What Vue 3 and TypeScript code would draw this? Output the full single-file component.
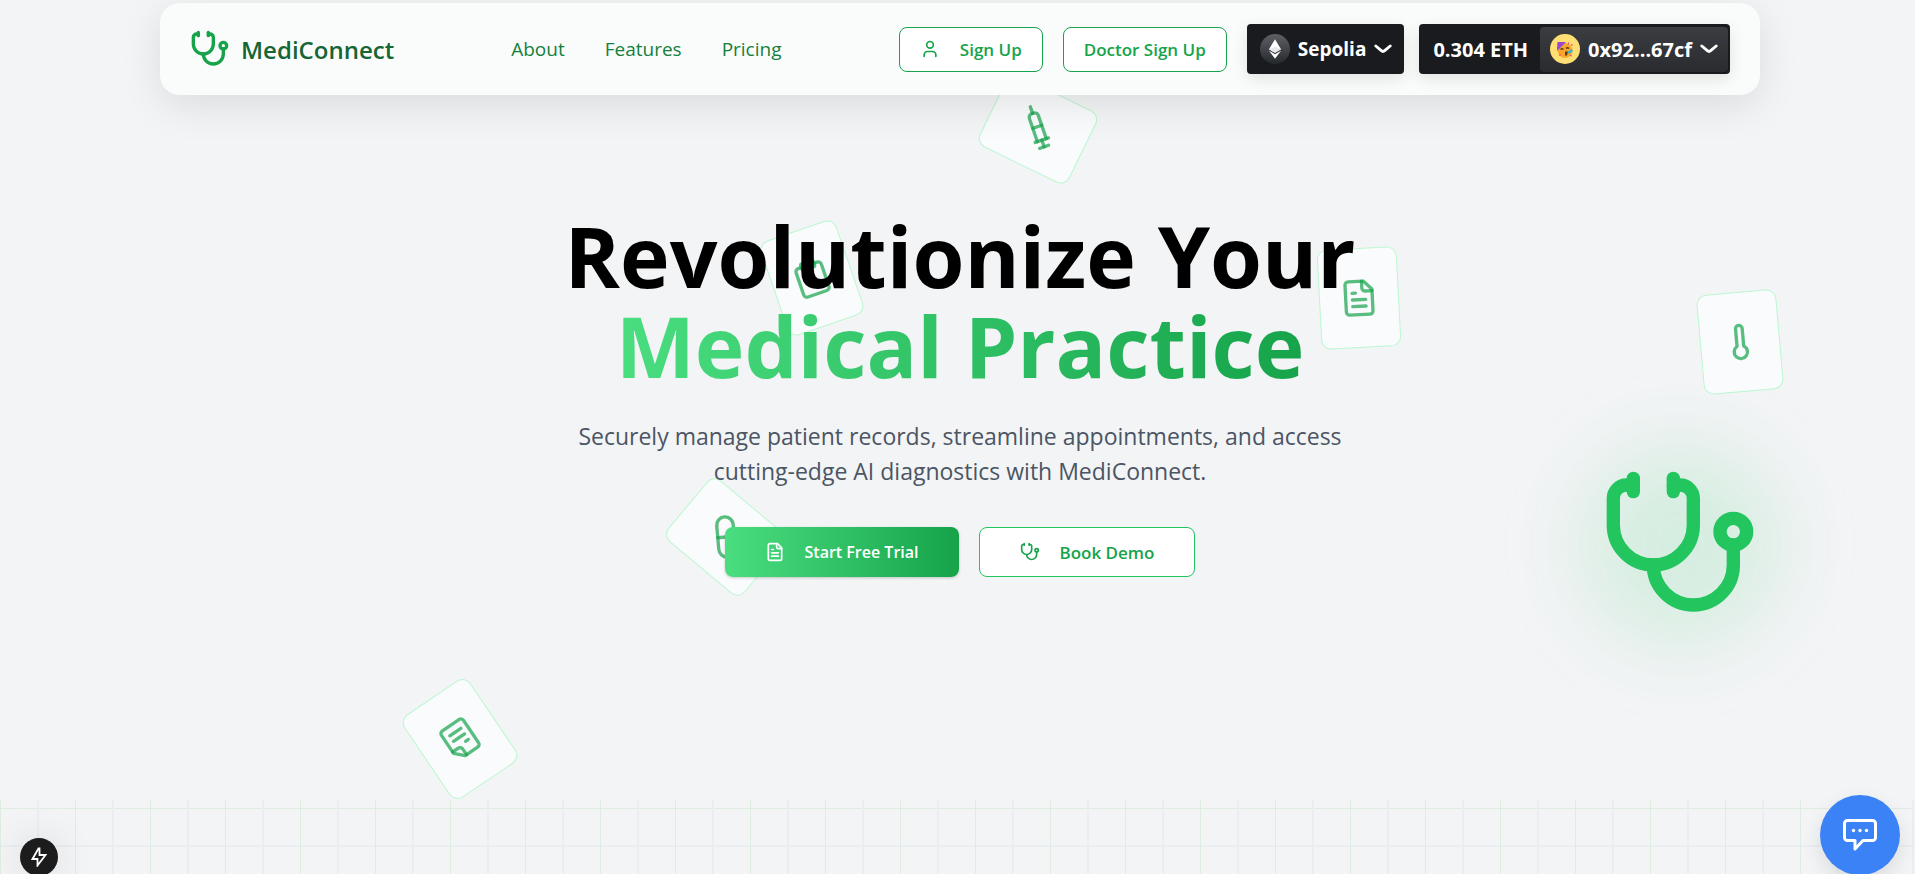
<script setup lang="ts">
interface FloatCard {
  name: string
  paths: string[]
}

const FILE_TEXT: string[] = [
  'M15 2H6a2 2 0 0 0-2 2v16a2 2 0 0 0 2 2h12a2 2 0 0 0 2-2V7Z',
  'M14 2v4a2 2 0 0 0 2 2h4',
  'M10 9H8',
  'M16 13H8',
  'M16 17H8',
]
const STETHOSCOPE: string[] = [
  'M11 2v2',
  'M5 2v2',
  'M5 3H4a2 2 0 0 0-2 2v4a6 6 0 0 0 12 0V5a2 2 0 0 0-2-2h-1',
  'M8 15a6 6 0 0 0 12 0v-3',
  'M22 10a2 2 0 1 1-4 0a2 2 0 1 1 4 0',
]

const cards: FloatCard[] = [
  {
    name: 'syringe',
    paths: [
      'm18 2 4 4',
      'm17 7 3-3',
      'M19 9 8.7 19.3c-1 1-2.5 1-3.4 0l-.6-.6c-1-1-1-2.5 0-3.4L15 5',
      'm9 11 4 4',
      'm5 19-3 3',
      'm14 4 6 6',
    ],
  },
  {
    name: 'clipboard',
    paths: [
      'M9 2h6a1 1 0 0 1 1 1v2a1 1 0 0 1-1 1H9a1 1 0 0 1-1-1V3a1 1 0 0 1 1-1Z',
      'M16 4h2a2 2 0 0 1 2 2v14a2 2 0 0 1-2 2H6a2 2 0 0 1-2-2V6a2 2 0 0 1 2-2h2',
    ],
  },
  { name: 'record', paths: FILE_TEXT },
  { name: 'thermometer', paths: ['M14 4v10.54a4 4 0 1 1-4 0V4a2 2 0 0 1 4 0Z'] },
  {
    name: 'pill',
    paths: ['m10.5 20.5 10-10a4.95 4.95 0 1 0-7-7l-10 10a4.95 4.95 0 1 0 7 7Z', 'm8.5 8.5 7 7'],
  },
  { name: 'note', paths: FILE_TEXT },
]

const links: string[] = ['About', 'Features', 'Pricing']
</script>

<template>
  <div class="page">
    <div class="scene" aria-hidden="true">
      <div class="glow"></div>
      <div v-for="card in cards" :key="card.name" class="float-card" :class="card.name">
        <svg class="icon" viewBox="0 0 24 24">
          <path v-for="d in card.paths" :key="d" :d="d" />
        </svg>
      </div>
      <svg class="icon hero-scope" viewBox="0 0 24 24">
        <path v-for="d in STETHOSCOPE" :key="d" :d="d" />
      </svg>
    </div>

    <header class="header">
      <nav class="navbar">
        <a class="brand" href="#">
          <svg class="icon brand-icon" viewBox="0 0 24 24" aria-hidden="true">
            <path v-for="d in STETHOSCOPE" :key="d" :d="d" />
          </svg>
          <span>MediConnect</span>
        </a>
        <div class="links">
          <a v-for="link in links" :key="link" :href="'#' + link.toLowerCase()">{{ link }}</a>
        </div>
        <div class="actions">
          <button type="button" class="outline-btn">
            <svg class="icon small-icon" viewBox="0 0 24 24" aria-hidden="true">
              <path d="M19 21v-2a4 4 0 0 0-4-4H9a4 4 0 0 0-4 4v2" />
              <circle cx="12" cy="7" r="4" />
            </svg>
            <span>Sign Up</span>
          </button>
          <button type="button" class="outline-btn">Doctor Sign Up</button>
          <div class="wallet">
            <button type="button" class="chain">
              <svg class="token" viewBox="0 0 28 28" aria-hidden="true">
                <defs>
                  <linearGradient id="token-bg" x1="0" y1="0" x2="0" y2="1">
                    <stop offset="0" stop-color="#5f6065" />
                    <stop offset="1" stop-color="#25292e" />
                  </linearGradient>
                </defs>
                <circle cx="14" cy="14" r="14" fill="url(#token-bg)" />
                <path d="M8.4 14.3 14 4.8l5.6 9.5-5.6 3.2Z" fill="#fff" />
                <path d="m8.4 15.6 5.6 3.2 5.6-3.2L14 23.2Z" fill="#fff" />
                <path d="m8.4 14.3 5.6-2.4 5.6 2.4-5.6 3.2Z" fill="#e6e7e9" />
              </svg>
              <span>Sepolia</span>
              <svg class="chevron" viewBox="-0.5 -0.5 15 8" aria-hidden="true">
                <path d="m1 1 4.6 3.9c.8.7 2 .7 2.8 0L13 1" />
              </svg>
            </button>
            <button type="button" class="account">
              <span class="balance">0.304 ETH</span>
              <span class="address">
                <svg class="token" viewBox="0 0 30 30" aria-hidden="true">
                  <circle cx="15" cy="15" r="15" fill="#ffdf74" />
                  <circle cx="15" cy="16.5" r="7.4" fill="#f9a72b" />
                  <path d="M7.5 8h8.5l-9 9Z" fill="#8b4bd6" />
                  <path d="m9 8 3 4M13 8l-6 6" stroke="#c63bb4" stroke-width="1" />
                  <path d="M10.5 15.5q1.5-1.5 3 0M16 14.5q1.5-1.5 3 0" fill="none" stroke="#5d3a12" stroke-width="1.2" />
                  <path d="M15 17.5h3l-1 4h-2Z" fill="#5d3a12" />
                  <path d="m17.5 18 4-3 1.5 2-4 3Z" fill="#2fb5d6" />
                  <path d="M18.5 8.5v2M21 10.5l1.5 1M10 20v2M20 21.5l2 .5" stroke="#ec4b7b" stroke-width="1.2" />
                </svg>
                <span>0x92...67cf</span>
                <svg class="chevron" viewBox="-0.5 -0.5 15 8" aria-hidden="true">
                  <path d="m1 1 4.6 3.9c.8.7 2 .7 2.8 0L13 1" />
                </svg>
              </span>
            </button>
          </div>
        </div>
      </nav>
    </header>

    <main class="hero">
      <h1>Revolutionize Your<br /><span class="accent">Medical Practice</span></h1>
      <p>
        Securely manage patient records, streamline appointments, and access
        cutting-edge AI diagnostics with MediConnect.
      </p>
      <div class="cta">
        <button type="button" class="primary-btn">
          <svg class="icon small-icon" viewBox="0 0 24 24" aria-hidden="true">
            <path v-for="d in FILE_TEXT" :key="d" :d="d" />
          </svg>
          <span>Start Free Trial</span>
        </button>
        <button type="button" class="demo-btn">
          <svg class="icon small-icon" viewBox="0 0 24 24" aria-hidden="true">
            <path v-for="d in STETHOSCOPE" :key="d" :d="d" />
          </svg>
          <span>Book Demo</span>
        </button>
      </div>
    </main>

    <section class="grid-section"></section>

    <button type="button" class="dev-btn" aria-label="Developer tools">
      <svg viewBox="0 0 16 20" aria-hidden="true">
        <path d="M7.5 1.5 1.5 12h5v6.5L14.5 8h-6V1.5Z" />
      </svg>
    </button>
    <button type="button" class="chat-btn" aria-label="Open chat">
      <svg viewBox="0 0 34 32" aria-hidden="true">
        <path d="M4.5 1.5h25a3 3 0 0 1 3 3v14a3 3 0 0 1-3 3H20L12 30v-8.5H4.5a3 3 0 0 1-3-3v-14a3 3 0 0 1 3-3Z" />
        <circle cx="10.5" cy="11.5" r="1.7" />
        <circle cx="17" cy="11.5" r="1.7" />
        <circle cx="23.5" cy="11.5" r="1.7" />
      </svg>
    </button>
  </div>
</template>

<style>
body {
  margin: 0;
  background: #f3f4f6;
}
</style>

<style scoped>
.page {
  position: relative;
  display: flex;
  flex-direction: column;
  min-height: 100vh;
  overflow: hidden;
  background: #f3f4f6;
  font-family: "Open Sans", "Noto Sans", sans-serif;
  color: #000;
}
*,
*::before {
  box-sizing: border-box;
}
button {
  margin: 0;
  border: 0;
  font: inherit;
  cursor: pointer;
}
a {
  color: inherit;
  text-decoration: none;
}
.icon {
  fill: none;
  stroke: currentColor;
  stroke-width: 2;
  stroke-linecap: round;
  stroke-linejoin: round;
}

/* floating decorations */
.scene {
  position: absolute;
  inset: 0;
}
.float-card {
  position: absolute;
  display: flex;
  align-items: center;
  justify-content: center;
  width: 80px;
  height: 100px;
  border: 1px solid #bbf7d0;
  border-radius: 10px;
  background: #fafbfd;
  color: rgba(22, 163, 74, 0.7);
}
.float-card .icon {
  width: 40px;
  height: 40px;
}
.syringe {
  left: 998px;
  top: 79px;
  transform: rotate(116deg);
}
.clipboard {
  left: 772px;
  top: 228px;
  transform: rotate(-19deg);
}
.record {
  left: 1319px;
  top: 248px;
  transform: rotate(-3deg);
}
.thermometer {
  left: 1700px;
  top: 292px;
  transform: rotate(-5deg);
}
.pill {
  left: 686px;
  top: 487px;
  transform: rotate(-50deg);
}
.note {
  left: 420px;
  top: 689px;
  transform: rotate(146deg);
}
.hero-scope {
  position: absolute;
  left: 1600px;
  top: 465px;
  width: 160px;
  height: 160px;
  color: #22c55e;
}
.glow {
  position: absolute;
  left: 1580px;
  top: 445px;
  width: 200px;
  height: 200px;
  border-radius: 50%;
  background: rgba(34, 197, 94, 0.14);
  filter: blur(40px);
}

/* navigation */
.header {
  position: relative;
  padding: 3px 155px 0 160px;
}
.navbar {
  display: flex;
  align-items: center;
  height: 92px;
  padding: 0 30px;
  border-radius: 20px;
  background: #fafcfb;
  box-shadow: 0 10px 40px rgba(0, 0, 0, 0.1);
}
.brand {
  display: flex;
  align-items: center;
  gap: 11px;
  color: #166534;
  font-size: 24px;
  font-weight: 600;
}
.brand-icon {
  width: 40px;
  height: 40px;
  color: #16a34a;
}
.links {
  display: flex;
  gap: 40px;
  margin-left: 117px;
  color: #15803d;
  font-size: 19px;
}
.actions {
  display: flex;
  align-items: center;
  gap: 20px;
  margin-left: auto;
}
.outline-btn {
  display: flex;
  align-items: center;
  height: 45px;
  padding: 0 20px;
  border: 1px solid #16a34a;
  border-radius: 8px;
  background: #fff;
  color: #16a34a;
  font-size: 17px;
  font-weight: 600;
}
.small-icon {
  width: 20px;
  height: 20px;
  margin-right: 20px;
}
.wallet {
  display: flex;
  gap: 15px;
  color: #fff;
  font-size: 20px;
  font-weight: 700;
}
.chain,
.account {
  display: flex;
  align-items: center;
  height: 50px;
  border-radius: 4px;
  background: #1a1b1f;
  box-shadow: 0 5px 15px rgba(0, 0, 0, 0.1);
  color: #fff;
}
.chain {
  gap: 8px;
  padding: 0 12px 0 13px;
  font-size: 19px;
}
.account {
  padding: 0 2px 0 0;
}
.balance {
  padding: 0 12px 0 14px;
}
.address {
  display: flex;
  align-items: center;
  gap: 8px;
  height: 45px;
  padding: 0 10px;
  border-radius: 4px;
  background: linear-gradient(#3c3d42, #2a2b2f);
}
.token {
  width: 30px;
  height: 30px;
}
.chevron {
  width: 18px;
  height: 10px;
  fill: none;
  stroke: #fff;
  stroke-width: 2.4;
  stroke-linecap: round;
}

/* hero */
.hero {
  position: relative;
  display: flex;
  flex-direction: column;
  align-items: center;
  padding: 116px 0 223px 5px;
  text-align: center;
}
h1 {
  margin: 0;
  font-size: 84px;
  font-weight: 700;
  line-height: 90px;
}
.accent {
  display: inline-block;
  background: linear-gradient(to right, #4ade80, #16a34a);
  background-clip: text;
  -webkit-background-clip: text;
  color: transparent;
}
p {
  max-width: 800px;
  margin: 28px 0 0;
  color: #4b5563;
  font-size: 23px;
  line-height: 35px;
}
.cta {
  display: flex;
  gap: 20px;
  margin-top: 38px;
}
.primary-btn,
.demo-btn {
  display: flex;
  align-items: center;
  height: 50px;
  padding: 0 40px;
  border-radius: 8px;
  font-size: 16px;
  font-weight: 600;
}
.primary-btn {
  background: linear-gradient(to right, #4ade80, #16a34a);
  box-shadow: 0 1px 3px rgba(0, 0, 0, 0.2);
  color: #fff;
}
.demo-btn {
  border: 1px solid #22c55e;
  background: #fff;
  color: #16a34a;
  font-size: 17px;
}

/* lower section */
.grid-section {
  flex: 1;
  min-height: 74px;
  background-image:
    linear-gradient(to right, #deece2 1px, transparent 1px, transparent 37px, #ebeef0 37px, #ebeef0 39px, transparent 39px),
    linear-gradient(to bottom, #deece2 1px, transparent 1px, transparent 37px, #ebeef0 37px, #ebeef0 39px, transparent 39px);
  background-position: 0 8px;
  background-size: 75px 75px;
}

/* corner buttons */
.dev-btn,
.chat-btn {
  position: absolute;
  display: flex;
  align-items: center;
  justify-content: center;
  padding: 0;
  border-radius: 50%;
}
.dev-btn {
  left: 20px;
  bottom: -2px;
  width: 38px;
  height: 38px;
  background: #1c1c1d;
  box-shadow: 0 0 40px rgba(0, 0, 0, 0.12);
}
.dev-btn svg {
  width: 16px;
  height: 20px;
  fill: none;
  stroke: #fff;
  stroke-width: 1.8;
}
.chat-btn {
  right: 15px;
  bottom: -1px;
  width: 80px;
  height: 80px;
  background: #3b82f6;
  box-shadow: 0 8px 20px rgba(0, 0, 0, 0.1);
}
.chat-btn svg {
  width: 34px;
  height: 32px;
  fill: none;
  stroke: #fff;
  stroke-width: 3;
  stroke-linejoin: round;
}
.chat-btn circle {
  fill: #fff;
  stroke: none;
}
</style>
